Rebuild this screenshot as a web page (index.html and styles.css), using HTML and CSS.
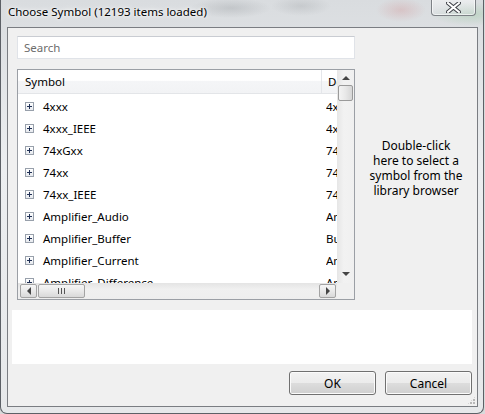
FILE: index.html
```html
<!DOCTYPE html>
<html lang="en">
<head>
    <meta charset="UTF-8">
    <title>Choose Symbol</title>
    <link rel="stylesheet" href="styles.css">
</head>
<body>
    <div class="window">
        <div class="titlebar">
            <span class="title">Choose Symbol (12193 items loaded)</span>
            <div class="close">
                <svg width="15" height="11" viewBox="0 0 15 11">
                    <path d="M2 1 L13 10 M13 1 L2 10" stroke="#3c3f45" stroke-width="4" stroke-linecap="square"/>
                    <path d="M2 1 L13 10 M13 1 L2 10" stroke="#ffffff" stroke-width="2" stroke-linecap="square"/>
                </svg>
            </div>
        </div>
        <div class="client">
            <div class="top">
                <div class="left">
                    <div class="search">Search</div>
                    <div class="tree">
                        <div class="tree-main">
                            <div class="tree-view">
                                <div class="tree-head">
                                    <span class="head-name">Symbol</span>
                                    <span class="head-desc">Desc</span>
                                </div>
                                <div class="rows">
                                    <div class="row"><span class="plus"></span><span class="name">4xxx</span><span class="desc">4xxx</span></div>
                                    <div class="row"><span class="plus"></span><span class="name">4xxx_IEEE</span><span class="desc">4xxx</span></div>
                                    <div class="row"><span class="plus"></span><span class="name">74xGxx</span><span class="desc">74xG</span></div>
                                    <div class="row"><span class="plus"></span><span class="name">74xx</span><span class="desc">74xx</span></div>
                                    <div class="row"><span class="plus"></span><span class="name">74xx_IEEE</span><span class="desc">74xx</span></div>
                                    <div class="row"><span class="plus"></span><span class="name">Amplifier_Audio</span><span class="desc">Amp</span></div>
                                    <div class="row"><span class="plus"></span><span class="name">Amplifier_Buffer</span><span class="desc">Buf</span></div>
                                    <div class="row"><span class="plus"></span><span class="name">Amplifier_Current</span><span class="desc">Amp</span></div>
                                    <div class="row"><span class="plus"></span><span class="name">Amplifier_Difference</span><span class="desc">Amp</span></div>
                                </div>
                            </div>
                            <div class="vscroll">
                                <div class="arrow up"></div>
                                <div class="vthumb"></div>
                                <div class="vtrack"></div>
                                <div class="arrow down"></div>
                            </div>
                        </div>
                        <div class="tree-foot">
                            <div class="hscroll">
                                <div class="hbtn"><span class="arrow left"></span></div>
                                <div class="hthumb"><span class="grip"></span></div>
                                <div class="htrack"></div>
                                <div class="hbtn"><span class="arrow right"></span></div>
                            </div>
                            <div class="corner"></div>
                        </div>
                    </div>
                </div>
                <div class="hint">Double-click<br>here to select a<br>symbol from the<br>library browser</div>
            </div>
            <div class="preview"></div>
            <div class="buttons">
                <button class="btn">OK</button>
                <button class="btn">Cancel</button>
            </div>
            <div class="sizegrip"></div>
        </div>
    </div>
</body>
</html>
```

FILE: styles.css
```css
body {
    margin: 0;
    padding: 0;
    background: #d9dadb;
    font-family: "Noto Sans", "Open Sans", sans-serif;
    font-size: 11.5px;
    color: #000;
}

.window {
    position: relative;
    box-sizing: border-box;
    width: 484px;
    height: 414px;
    padding: 27px 5px 6px 6px;
    border: 1px solid #5c6066;
    border-top: none;
    border-radius: 0 0 7px 7px;
    background:
        radial-gradient(ellipse 40px 10px at 230px 8px, rgba(90, 95, 100, 0.18), transparent),
        radial-gradient(ellipse 30px 10px at 300px 6px, rgba(90, 95, 100, 0.15), transparent),
        radial-gradient(ellipse 25px 12px at 400px 10px, rgba(200, 80, 80, 0.18), transparent),
        radial-gradient(ellipse 40px 12px at 470px 14px, rgba(80, 170, 90, 0.2), transparent),
        linear-gradient(#d9dcdf, #eceef0 40%, #e6e8ea);
}

.titlebar {
    position: absolute;
    top: 0;
    left: 0;
    right: 0;
    height: 27px;
}

.title {
    position: absolute;
    left: 7px;
    top: 4px;
    font-size: 11.5px;
    text-shadow: 0 0 6px #fff, 0 0 3px #fff;
}

.close {
    position: absolute;
    left: 430px;
    top: -1px;
    width: 45px;
    height: 17px;
    box-sizing: border-box;
    border: 1px solid #7d8186;
    border-top: none;
    border-radius: 0 0 4px 4px;
    background: linear-gradient(rgba(255, 255, 255, 0.5), rgba(220, 224, 228, 0.3));
    box-shadow: inset 0 0 0 1px rgba(255, 255, 255, 0.6);
    display: flex;
    align-items: center;
    justify-content: center;
}

.client {
    position: relative;
    box-sizing: border-box;
    height: 380px;
    border: 1px solid #7a7d82;
    background: #f0f0f0;
    padding: 8px 5px 0 4px;
    display: flex;
    flex-direction: column;
}

.top {
    display: flex;
    align-items: center;
    margin-left: 5px;
}

.left {
    width: 338px;
}

.search {
    box-sizing: border-box;
    height: 23px;
    border: 1px solid #e0e3e8;
    border-top-color: #c9ccd2;
    background: #fff;
    color: #6d6d6d;
    padding: 3px 6px;
    line-height: 15px;
}

.tree {
    box-sizing: border-box;
    margin-top: 10px;
    height: 231px;
    border: 1px solid #9b9fa5;
    background: #fff;
}

.tree-main {
    display: flex;
    height: 213px;
}

.tree-view {
    width: 319px;
    overflow: hidden;
}

.tree-head {
    display: flex;
    height: 23px;
    border-bottom: 1px solid #e3e5e8;
    background: linear-gradient(#ffffff, #ffffff 45%, #f4f5f7 50%, #f2f3f5);
    line-height: 23px;
}

.head-name {
    width: 304px;
    flex: none;
    box-sizing: border-box;
    padding-left: 7px;
    border-right: 1px solid #e4e6ea;
}

.head-desc {
    flex: 1;
    min-width: 0;
    overflow: hidden;
    padding-left: 6px;
    white-space: nowrap;
}

.rows {
    padding-top: 1px;
}

.row {
    display: flex;
    align-items: center;
    height: 22px;
    padding-left: 7px;
    white-space: nowrap;
}

.plus {
    position: relative;
    flex: none;
    box-sizing: border-box;
    width: 9px;
    height: 9px;
    border: 1px solid #98a0ab;
    background: linear-gradient(#ffffff, #e6e9ee);
}

.plus::before,
.plus::after {
    content: "";
    position: absolute;
    background: #1f2f54;
}

.plus::before {
    left: 1px;
    top: 3px;
    width: 5px;
    height: 1px;
}

.plus::after {
    left: 3px;
    top: 1px;
    width: 1px;
    height: 5px;
}

.name {
    width: 283px;
    flex: none;
    padding-left: 9px;
}

.desc {
    flex: 1;
    min-width: 0;
    overflow: hidden;
}

.vscroll {
    width: 17px;
    display: flex;
    flex-direction: column;
    align-items: center;
    background: linear-gradient(90deg, #e6e6e6, #f2f2f2 40%, #f0f0f0);
}

.arrow {
    width: 0;
    height: 0;
    border: 4px solid transparent;
}

.arrow.up {
    margin-top: 6px;
    border-top: none;
    border-bottom: 4px solid #454545;
}

.arrow.down {
    margin-bottom: 7px;
    border-bottom: none;
    border-top: 4px solid #454545;
}

.arrow.left {
    border-left: none;
    border-right: 4px solid #454545;
}

.arrow.right {
    border-right: none;
    border-left: 4px solid #454545;
}

.vthumb {
    box-sizing: border-box;
    margin-top: 5px;
    width: 15px;
    height: 16px;
    border: 1px solid #9a9a9a;
    border-radius: 2px;
    background: linear-gradient(90deg, #f4f4f4, #e8e8e8 50%, #d6d6d6);
}

.vtrack {
    flex: 1;
}

.tree-foot {
    display: flex;
    height: 16px;
}

.hscroll {
    width: 319px;
    display: flex;
    align-items: center;
    padding: 0 1px 0 2px;
    box-sizing: border-box;
    background: linear-gradient(#e4e4e4, #f0f0f0 40%, #eeeeee);
}

.hbtn,
.hthumb {
    box-sizing: border-box;
    height: 14px;
    border: 1px solid #a3a3a3;
    border-radius: 2px;
    background: linear-gradient(#f6f6f6, #e9e9e9 50%, #d9d9d9);
    display: flex;
    align-items: center;
    justify-content: center;
}

.hbtn {
    width: 17px;
}

.hthumb {
    width: 47px;
    margin-left: 1px;
}

.grip {
    width: 7px;
    height: 6px;
    background: repeating-linear-gradient(90deg, #555 0 1px, transparent 1px 3px);
}

.htrack {
    flex: 1;
}

.corner {
    flex: 1;
    background: #f0f0f0;
}

.hint {
    flex: 1;
    padding-left: 5px;
    text-align: center;
    font-size: 12px;
    line-height: 15px;
}

.preview {
    margin-top: 10px;
    height: 54px;
    background: #fff;
}

.buttons {
    display: flex;
    justify-content: flex-end;
    gap: 9px;
    margin-top: 7px;
}

.btn {
    width: 87px;
    height: 24px;
    border: 1px solid #707070;
    border-radius: 3px;
    background: linear-gradient(#f2f2f2, #ebebeb 50%, #dddddd 50%, #cfcfcf);
    box-shadow: inset 0 0 0 1px #fbfbfb;
    font-family: "Noto Sans", "Open Sans", sans-serif;
    font-size: 12px;
    color: #000;
    padding: 0;
}

.sizegrip {
    position: absolute;
    right: 1px;
    bottom: 1px;
    width: 9px;
    height: 9px;
    background: radial-gradient(circle at 1px 1px, #b8b8b8 1px, transparent 1.2px) 0 0 / 3px 3px;
    clip-path: polygon(100% 0, 100% 100%, 0 100%);
}
```
